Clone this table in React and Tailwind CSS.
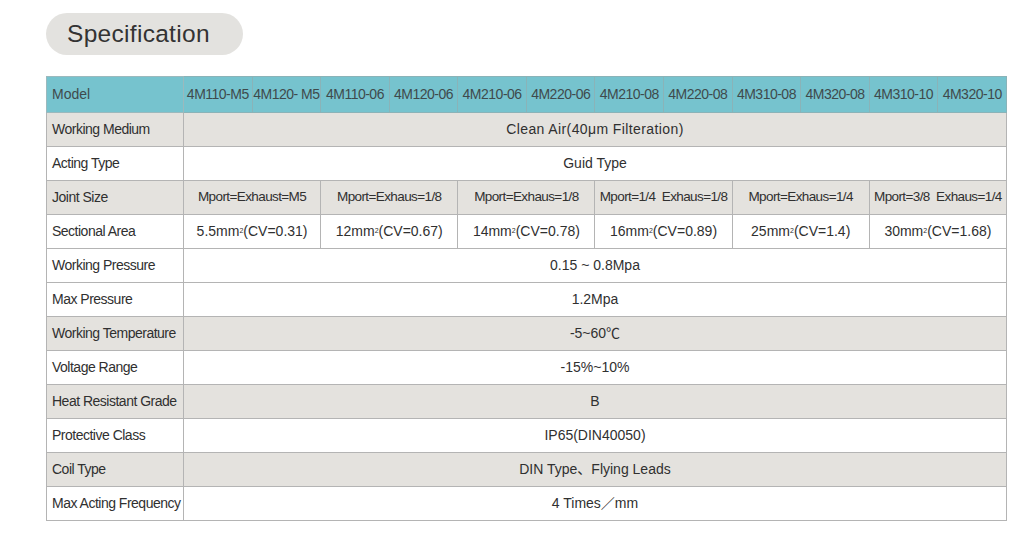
import React from 'react';

const models = [
  '4M110-M5', '4M120- M5', '4M110-06', '4M120-06', '4M210-06', '4M220-06',
  '4M210-08', '4M220-08', '4M310-08', '4M320-08', '4M310-10', '4M320-10',
];

const joint = [
  'Mport=Exhaust=M5',
  'Mport=Exhaus=1/8',
  'Mport=Exhaus=1/8',
  'Mport=1/4\u00a0\u00a0Exhaus=1/8',
  'Mport=Exhaus=1/4',
  'Mport=3/8\u00a0\u00a0Exhaus=1/4',
];

const area = [
  ['5.5', '0.31'],
  ['12', '0.67'],
  ['14', '0.78'],
  ['16', '0.89'],
  ['25', '1.4'],
  ['30', '1.68'],
];

// label, value, gray?
const rows = [
  ['Working Pressure', '0.15\u00a0~\u00a00.8Mpa', false],
  ['Max Pressure', '1.2Mpa', false],
  ['Working Temperature', '-5~60\u2103', true],
  ['Voltage Range', '-15%~10%', false],
  ['Heat Resistant Grade', 'B', true],
  ['Protective Class', 'IP65(DIN40050)', false],
  ['Coil Type', 'DIN Type\u3001Flying Leads', true],
  ['Max Acting Frequency', '4 Times\uff0fmm', false],
];

const cell = 'border border-[#b4b4b4] h-[34px] p-0 text-center align-middle';
const label = 'border border-[#b4b4b4] h-[34px] pl-[5px] pr-0 text-left align-middle whitespace-nowrap tracking-[-0.5px]';

export default function App() {
  return (
    <div
      className="w-[1036px] h-[538px] bg-white text-[#303030] pt-[13px] pl-[46px]"
      style={{ fontFamily: '"Liberation Sans", Arial, "Noto Sans CJK SC", sans-serif' }}
    >
      <div className="w-[197px] h-[42px] rounded-full bg-[#e3e2df] flex items-center pl-[21px] text-[24.5px] text-[#333] tracking-[0.3px]">
        Specification
      </div>

      <table className="mt-[21px] w-[961px] table-fixed border-collapse text-[14px]">
        <colgroup>
          <col className="w-[137px]" />
          {models.map((m) => (
            <col key={m} />
          ))}
        </colgroup>
        <tbody>
          <tr className="bg-[#76c3ce] text-[#3f4a4c]">
            <td className="border border-[#9bb9bd] h-[36px] pl-[5px] text-left align-middle">Model</td>
            {models.map((m, i) => (
              <td key={i} className="border border-[#8ab3b8] h-[36px] p-0 text-center align-middle whitespace-nowrap tracking-[-0.5px]">
                {m}
              </td>
            ))}
          </tr>
          <tr className="bg-[#e4e2de]">
            <td className={label}>Working Medium</td>
            <td colSpan={12} className={`${cell} tracking-[0.4px]`}>Clean Air(40μm Filteration)</td>
          </tr>
          <tr className="bg-white">
            <td className={label}>Acting Type</td>
            <td colSpan={12} className={cell}>Guid Type</td>
          </tr>
          <tr className="bg-[#e4e2de]">
            <td className={label}>Joint Size</td>
            {joint.map((j, i) => (
              <td key={i} colSpan={2} className={`${cell} text-[13.5px] tracking-[-0.6px] whitespace-nowrap`}>
                {j}
              </td>
            ))}
          </tr>
          <tr className="bg-white">
            <td className={label}>Sectional Area</td>
            {area.map(([a, cv], i) => (
              <td key={i} colSpan={2} className={`${cell} whitespace-nowrap`}>
                {a}mm<sup className="text-[7px]">2</sup>(CV={cv})
              </td>
            ))}
          </tr>
          {rows.map(([l, v, g]) => (
            <tr key={l} className={g ? 'bg-[#e4e2de]' : 'bg-white'}>
              <td className={label}>{l}</td>
              <td colSpan={12} className={cell}>{v}</td>
            </tr>
          ))}
        </tbody>
      </table>
    </div>
  );
}
